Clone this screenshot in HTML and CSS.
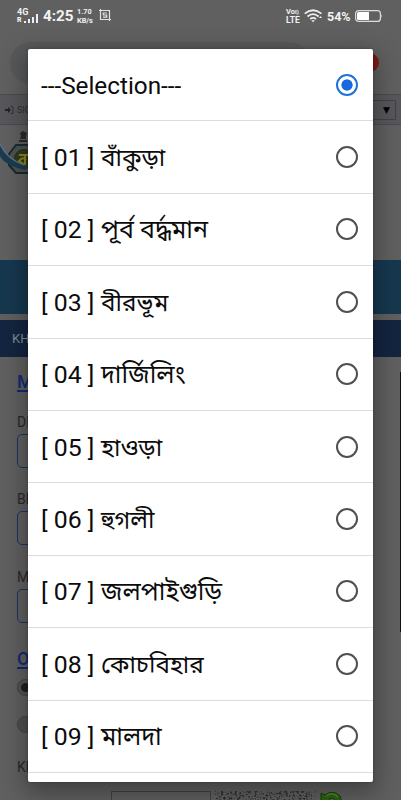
FILE: index.html
```html
<!DOCTYPE html>
<html lang="bn">
<head>
<meta charset="utf-8">
<title>Selection</title>
<link rel="stylesheet" href="styles.css">
</head>
<body>
<div class="page">
  <header class="status">
    <div class="stack net"><span>4G</span><span class="sig"><b>R</b><i></i><i></i><i></i><i></i></span></div>
    <span class="clock">4:25</span>
    <div class="stack speed"><span>1.70</span><span>KB/s</span></div>
    <svg class="shot" width="12" height="12" viewBox="0 0 12 12" fill="none" stroke="#e2e2e2"><path d="M0 1.500h10.500V12M1.500 0v10.500H12" stroke-width="1.200"/><path d="M7.800 4H4.300v2h3.400v2.200H4" stroke-width="1.200"/></svg>
    <div class="stack lte"><span class="vo">Vo<small>I)</small></span><span>LTE</span></div>
    <svg class="wifi" width="19" height="14" viewBox="0 0 19 14" fill="none" stroke="#eee" stroke-width="1.700"><path d="M.7 4.700Q9 -2.200 17.500 4.700M3.500 7.500Q9 2.700 14.700 7.500M6.200 10Q9 7.800 12 10"/><path d="M7.300 11.200h3.600L9.100 13.300zM15 9l1.500-2L18 9z" fill="#eee" stroke="none"/></svg>
    <span class="pct">54%</span>
    <svg class="battery" width="28" height="12" viewBox="0 0 28 12"><rect x=".6" y=".6" width="24.800" height="10.800" rx="3" fill="none" stroke="#ddd" stroke-width="1.200"/><path d="M3.500 2H14v8H3.500Q2 10 2 8.500v-5Q2 2 3.500 2z" fill="#fff"/><path d="M26.500 4v4q1.500-2 0-4z" fill="#ddd"/></svg>
  </header>
  <div class="browser"><div class="address"></div><div class="alert"></div></div>
  <div class="signin">
    <svg width="9" height="8" viewBox="0 0 9 8"><path d="M0 3h3V1l3 3-3 3V5H0z" fill="#222"/><path d="M5.500 .7H8v6.600H5.500" fill="none" stroke="#333"/></svg>
    <span>SIG</span><div class="lang">▼</div>
  </div>
  <div class="brand">
    <svg width="44" height="50" viewBox="0 0 44 50"><path d="M20 9h6V6l1-3-4-2-3 2 1 3zM19 10h8v2h-8z" fill="#292b2b"/><path d="M16 15h15l8 9v11l-8 8H16l-7-8V24z" fill="#4d5350" stroke="#172c32" stroke-width="2"/><circle cx="24" cy="29" r="9.500" fill="#303b1c" stroke="#202e20"/><path d="M19 25h12M25 24v11l-6-4q4-5 7-1" stroke="#8c8625" stroke-width="2" fill="none"/><path d="M0 13Q6 31 28 36L25 40Q4 35 0 26z" fill="#1c3b50"/><path d="M0 14Q7 29 24 35" fill="none" stroke="#5d707b" stroke-width="1.500"/></svg>
  </div>
  <div class="nav"></div>
  <div class="heading">KH</div>
  <main class="form">
    <a class="link">M</a>
    <label>DI</label><div class="field"></div>
    <label>Bl</label><div class="field"></div>
    <label>M</label><div class="field"></div>
    <a class="link second">O</a>
    <div class="dot on"></div><div class="dot"></div>
    <label class="last">Kl</label>
    <div class="captcha"><div class="code"></div>
      <svg class="noise" width="101" height="11"><filter id="n" x="0" y="0" width="1" height="1" color-interpolation-filters="sRGB"><feTurbulence type="fractalNoise" baseFrequency=".45" numOctaves="2" seed="4"/><feColorMatrix values="0 0 0 0 .16  0 0 0 0 .16  0 0 0 0 .16  4 0 0 0 -1.900"/></filter><rect width="101" height="11" filter="url(#n)"/></svg>
      <svg width="24" height="11" viewBox="0 0 24 11"><path d="M1 2l4 2Q13-2 20 5l2 6h-6Q14 5 9 8l3 3H1z" fill="#2b6510" stroke="#163d08"/><path d="M6 5q7-5 12 1" stroke="#4d8a22" stroke-width="1.500" fill="none"/></svg>
    </div>
  </main>
</div>
<div class="scroll"></div>
<div class="dialog">
  <div class="row"><span class="sel">---Selection---</span><i class="radio checked"></i></div>
  <div class="row"><span class="num">[ 01 ]</span><span class="bn">বাঁকুড়া</span><i class="radio"></i></div>
  <div class="row"><span class="num">[ 02 ]</span><span class="bn wide">পূর্ব বর্দ্ধমান</span><i class="radio"></i></div>
  <div class="row"><span class="num">[ 03 ]</span><span class="bn">বীরভূম</span><i class="radio"></i></div>
  <div class="row"><span class="num">[ 04 ]</span><span class="bn wide">দার্জিলিং</span><i class="radio"></i></div>
  <div class="row"><span class="num">[ 05 ]</span><span class="bn">হাওড়া</span><i class="radio"></i></div>
  <div class="row"><span class="num">[ 06 ]</span><span class="bn">হুগলী</span><i class="radio"></i></div>
  <div class="row"><span class="num">[ 07 ]</span><span class="bn wide">জলপাইগুড়ি</span><i class="radio"></i></div>
  <div class="row"><span class="num">[ 08 ]</span><span class="bn">কোচবিহার</span><i class="radio"></i></div>
  <div class="row"><span class="num">[ 09 ]</span><span class="bn wide">মালদা</span><i class="radio"></i></div>
</div>
</body>
</html>
```
FILE: styles.css
```css
* { box-sizing: border-box; }
body { margin: 0; width: 401px; height: 800px; overflow: hidden; position: relative; background: #606060; font-family: Roboto, "Noto Sans Bengali", "Noto Sans", sans-serif; }
.page { height: 800px; overflow: hidden; }
.status { height: 35px; padding: 8px 18px 0 17px; display: flex; align-items: flex-start; color: #f2f2f2; }
.stack { display: flex; flex-direction: column; font-size: 7.5px; line-height: 7px; font-weight: 700; }
.net { width: 26px; margin-top: -1px; }
.net > span:first-child { font-size: 9px; line-height: 10px; }
.sig { display: flex; align-items: flex-end; height: 6px; gap: 2px; }
.sig b { font-size: 7px; line-height: 5px; }
.sig i { width: 2px; height: 2px; background: #eee; }
.sig i:nth-of-type(2) { height: 4px; }
.sig i:nth-of-type(3) { height: 6px; }
.sig i:nth-of-type(4) { height: 9px; }
.clock { font-size: 15.3px; line-height: 17px; font-weight: 700; width: 34px; }
.speed { width: 22px; white-space: nowrap; font-size: 7.3px; line-height: 9px; margin-top: -1px; }
.shot { margin-top: 1px; }
.lte { margin-left: auto; width: 18px; font-size: 8.5px; line-height: 9px; margin-top: -1px; }
.lte .vo { font-size: 7.5px; }
.lte small { font-size: 6px; }
.wifi { margin-top: 1px; }
.pct { width: 27px; margin: 0 1px 0 4px; font-size: 12.5px; line-height: 17px; font-weight: 700; white-space: nowrap; }
.battery { margin-top: 2px; }
.browser { height: 59px; display: flex; padding: 7px 21px 0 10px; }
.address { width: 300px; height: 42px; border-radius: 21px; background: #58595b; }
.alert { width: 19px; height: 19px; margin: 11px 0 0 50px; border-radius: 50%; background: #7c1a17; }
.signin { height: 31px; border: solid #4a4b50; border-width: 1px 0; background: #58585c; display: flex; align-items: center; padding: 0 5px; gap: 3px; font-size: 9px; color: #303034; }
.lang { margin-left: auto; width: 40px; height: 20px; border: 1px solid #424247; text-align: right; padding-right: 5px; font: 9px/18px "DejaVu Sans", sans-serif; color: #000; }
.brand { height: 135px; padding-top: 5px; }
.nav { height: 54px; background: #16384f; }
.heading { height: 37px; margin-top: 6px; padding-left: 12px; background: #132541; color: #858b94; font-size: 13px; line-height: 37px; }
.form { padding: 13px 0 0 17px; display: flex; flex-direction: column; }
.link { font-size: 18px; line-height: 23px; height: 44px; font-weight: 500; color: #122a73; text-decoration: underline; text-underline-offset: 2px; text-decoration-thickness: 2px; }
.form label { height: 20px; font-size: 14px; line-height: 16px; color: #292929; }
.field { width: 340px; height: 34px; margin-bottom: 23.4px; border: 1px solid #183666; border-radius: 5px; }
.link.second { height: 32px; margin-top: 1px; }
.dot { flex: none; width: 17px; height: 17px; margin-bottom: 20px; border: 1px solid #444; border-radius: 50%; background: #505050; }
.dot.on { background: radial-gradient(circle, #202020 4px, #545454 5px); }
.form .last { margin-top: 6px; height: 32px; }
.captcha { display: flex; gap: 4px; margin-left: 94px; height: 20px; }
.code { width: 100px; border: 1px solid #424242; }
.scroll { position: absolute; right: 0; top: 372px; width: 1px; height: 260px; background: #111; }
.dialog { position: absolute; left: 28px; top: 49px; width: 345px; height: 733px; border-radius: 2px; background: #fff; box-shadow: 0 8px 24px 4px rgba(0,0,0,.32), 0 0 3px rgba(0,0,0,.25); overflow: hidden; color: #0c0c0c; }
.row { height: 72.4px; display: flex; align-items: center; padding: 2px 15px 0 13px; border-bottom: 1px solid #dcdcdc; font-size: 24.3px; line-height: 32px; white-space: nowrap; }
.num { width: 60px; font-size: 24.8px; }
.bn { font-size: 24.3px; }
.bn.wide { font-size: 25px; }
.radio { margin: -2px 0 0 auto; width: 22px; height: 22px; border: 2px solid #505050; border-radius: 50%; }
.radio.checked { border-color: #1e73d8; background: radial-gradient(circle, #1769e0 5.2px, #fff 6px); }
```
